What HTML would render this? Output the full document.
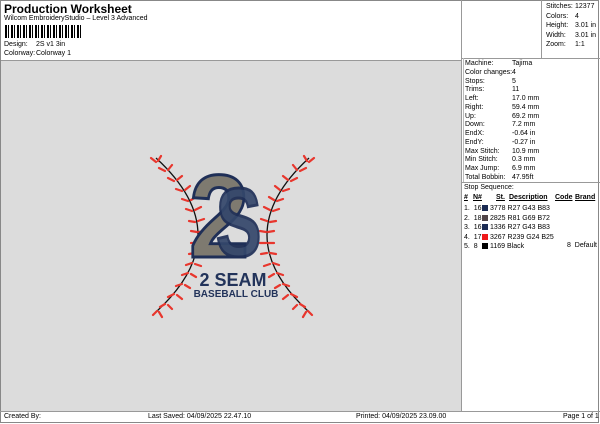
<!DOCTYPE html><html><head><style>
body{margin:0;width:600px;height:424px;background:#fff;font-family:"Liberation Sans",sans-serif;font-size:7px;color:#000;position:relative;overflow:hidden}
.a{position:absolute;white-space:nowrap}
</style></head><body>
<div style="position:absolute;left:0;top:0;width:599px;height:423px;border:1px solid #888;box-sizing:border-box"></div>
<div class="a" style="left:4px;top:2px;font-size:12px;font-weight:bold">Production Worksheet</div>
<div class="a" style="left:4px;top:15px">Wilcom EmbroideryStudio – Level 3 Advanced</div>
<div class="a" style="left:5px;top:25px;width:78px;height:13px;background:repeating-linear-gradient(90deg,#000 0 2px,#fff 2px 3px,#000 3px 4px,#fff 4px 6px)"></div>
<div class="a" style="left:4px;top:41px">Design:</div><div class="a" style="left:36px;top:41px">2S v1 3in</div>
<div class="a" style="left:4px;top:50px">Colorway:</div><div class="a" style="left:36px;top:50px">Colorway 1</div>
<div class="a" style="left:1px;top:60px;width:460px;height:351px;background:#dcdcdc;border-top:1px solid #999"></div>
<div class="a" style="left:461px;top:0;width:1px;height:411px;background:#999"></div>
<div class="a" style="left:541px;top:0;width:1px;height:58px;background:#999"></div>
<div class="a" style="left:461px;top:58px;width:139px;height:1px;background:#999"></div>
<div class="a" style="left:461px;top:182px;width:139px;height:1px;background:#999"></div>
<div class="a" style="left:463px;top:58px;width:1px;height:124px;background:#bbb"></div>
<div class="a" style="left:546px;top:2px;line-height:9.5px">Stitches:<br>Colors:<br>Height:<br>Width:<br>Zoom:</div>
<div class="a" style="left:575px;top:2px;line-height:9.5px">12377<br>4<br>3.01 in<br>3.01 in<br>1:1</div>
<div class="a" style="left:465px;top:60px;line-height:8.75px">Machine:<br>Color changes:<br>Stops:<br>Trims:<br>Left:<br>Right:<br>Up:<br>Down:<br>EndX:<br>EndY:<br>Max Stitch:<br>Min Stitch:<br>Max Jump:<br>Total Bobbin:</div>
<div class="a" style="left:512px;top:60px;line-height:8.75px">Tajima<br>4<br>5<br>11<br>17.0 mm<br>59.4 mm<br>69.2 mm<br>7.2 mm<br>-0.64 in<br>-0.27 in<br>10.9 mm<br>0.3 mm<br>6.9 mm<br>47.95ft</div>
<div class="a" style="left:464px;top:184px">Stop Sequence:</div>
<div class="a" style="left:464px;top:194px;font-weight:bold;text-decoration:underline">#</div>
<div class="a" style="left:473px;top:194px;font-weight:bold;text-decoration:underline">N#</div>
<div class="a" style="left:496px;top:194px;font-weight:bold;text-decoration:underline">St.</div>
<div class="a" style="left:509px;top:194px;font-weight:bold;text-decoration:underline">Description</div>
<div class="a" style="left:555px;top:194px;font-weight:bold;text-decoration:underline">Code</div>
<div class="a" style="left:575px;top:194px;font-weight:bold;text-decoration:underline">Brand</div>
<div class="a" style="left:464px;top:204px;line-height:9.6px">1.&nbsp; 16<br>2.&nbsp; 18<br>3.&nbsp; 16<br>4.&nbsp; 17<br>5.&nbsp; 8</div>
<div class="a" style="left:482px;top:205px;width:6px;height:6px;background:#1b2b53"></div>
<div class="a" style="left:482px;top:215px;width:6px;height:6px;background:#514548"></div>
<div class="a" style="left:482px;top:224px;width:6px;height:6px;background:#1b2b53"></div>
<div class="a" style="left:482px;top:234px;width:6px;height:6px;background:#ef1819"></div>
<div class="a" style="left:482px;top:243px;width:6px;height:6px;background:#000"></div>
<div class="a" style="left:490px;top:204px;line-height:9.6px">3778 R27 G43 B83<br>2825 R81 G69 B72<br>1336 R27 G43 B83<br>3267 R239 G24 B25<br>1169 Black</div>
<div class="a" style="left:567px;top:242px">8&nbsp; Default</div>
<div class="a" style="left:0;top:411px;width:600px;height:1px;background:#999"></div>
<div class="a" style="left:4px;top:413px">Created By:</div>
<div class="a" style="left:148px;top:413px">Last Saved: 04/09/2025 22.47.10</div>
<div class="a" style="left:356px;top:413px">Printed: 04/09/2025 23.09.00</div>
<div class="a" style="left:563px;top:413px">Page 1 of 1</div>
<svg class="a" style="left:0;top:0" width="600" height="424">
<g id="seam">
<path d="M156,158 Q240,235 156,312" fill="none" stroke="#111" stroke-width="1.3"/>
<g stroke="#e8362d" stroke-width="2.2" stroke-linecap="round" fill="none">
<path d="M156,162l-5,-4M158,161l3,-5
M165,171l-6,-3M168,170l4,-5M174,181l-6,-3M177,180l5,-4M182,191l-6,-2M185,190l5,-4
M188,201l-6,-2M191,200l5,-3M192,211l-6,-2M195,210l6,-3M195,222l-6,-1M198,221l6,-2
M197,232l-6,-1M199,232l6,-1M197,243l-6,0M199,243l6,0M195,253l-6,1M198,253l6,1
M192,263l-6,2M195,264l6,2M188,273l-6,2M191,274l5,3M182,284l-6,2M185,285l5,3
M174,294l-6,3M177,295l5,4M165,304l-5,3M168,305l4,4M157,311l-4,4M159,312l3,5"/>
</g></g>
<use href="#seam" transform="translate(465,0) scale(-1,1)"/>
<text transform="translate(189,257) scale(0.92,1)" font-family="Liberation Sans" font-weight="bold" font-size="118" fill="#7e7a70" stroke="#1f2f57" stroke-width="3">2</text>
<text transform="translate(216,256) scale(0.7,1)" font-family="Liberation Sans" font-weight="bold" font-size="97" fill="#34476b" stroke="#1f2f57" stroke-width="3" opacity="0.92">S</text>
<text transform="translate(233,286) scale(1,1.05)" text-anchor="middle" font-family="Liberation Sans" font-weight="bold" font-size="18" fill="#22335a">2 SEAM</text>
<text x="236" y="297" text-anchor="middle" font-family="Liberation Sans" font-weight="bold" font-size="10" fill="#22335a">BASEBALL CLUB</text>
</svg>
</body></html>
